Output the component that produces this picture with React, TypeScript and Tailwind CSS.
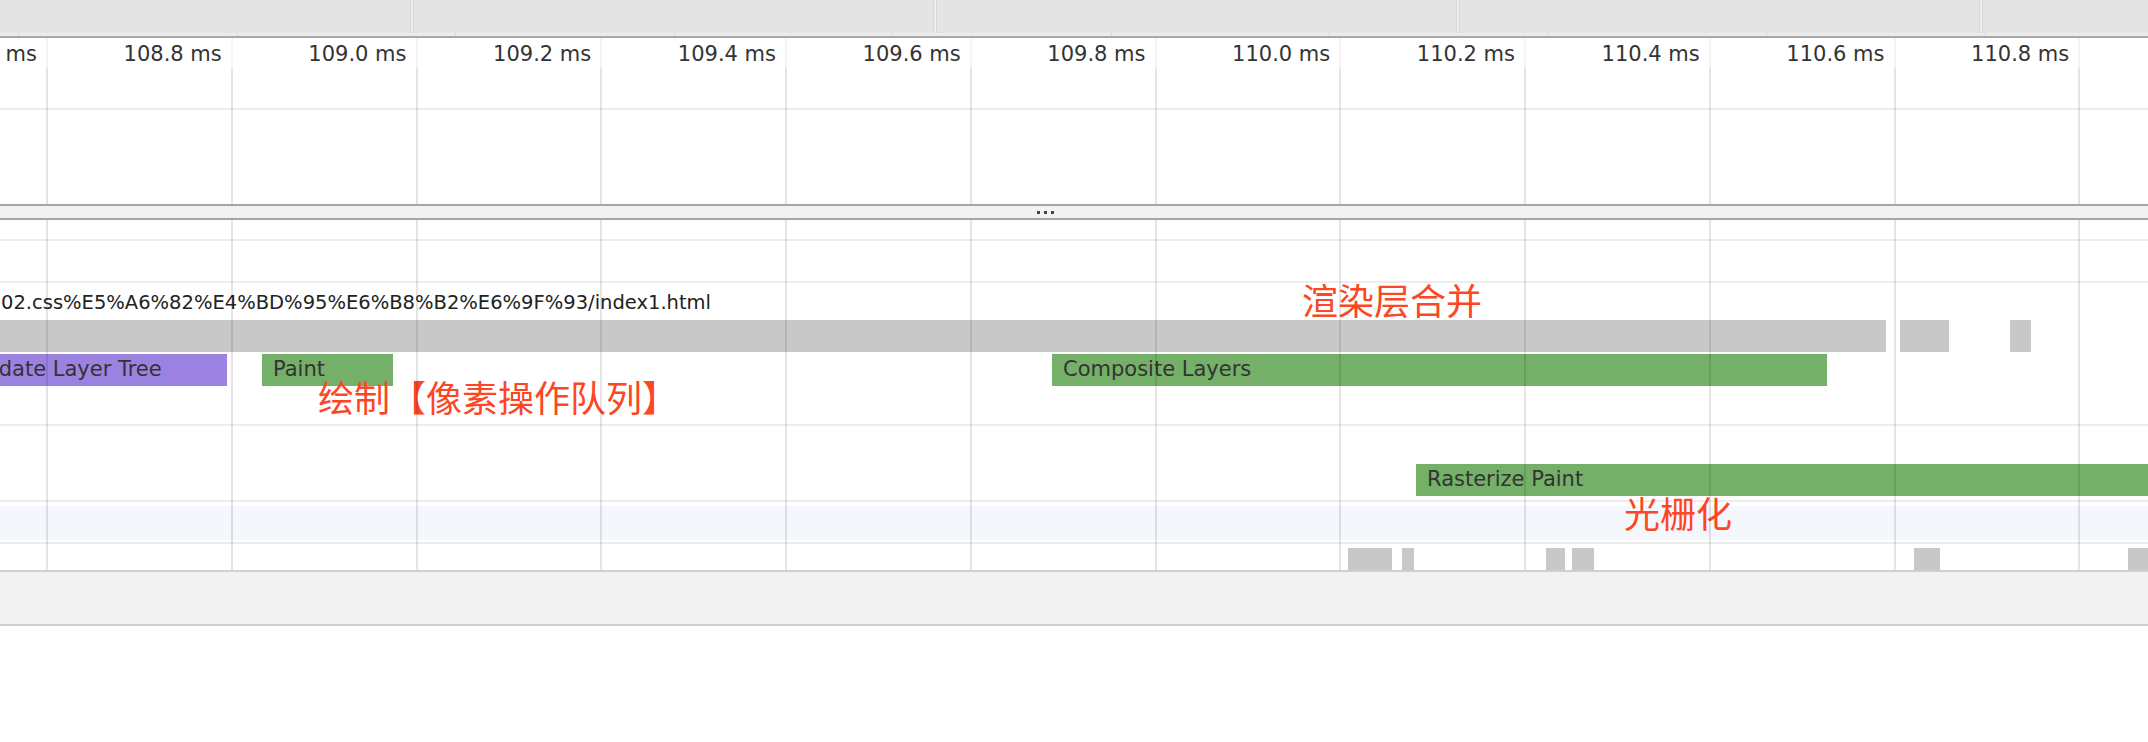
import React from 'react'

type Tone = 'idle' | 'render' | 'paint'

type Span = {
  left: number
  width: number
  tone: Tone
  label?: string
}

// 时间刻度，第一个在左边被裁掉，最后一列在屏幕外
const tickLabels = [
  '108.8 ms',
  '109.0 ms',
  '109.2 ms',
  '109.4 ms',
  '109.6 ms',
  '109.8 ms',
  '110.0 ms',
  '110.2 ms',
  '110.4 ms',
  '110.6 ms',
  '110.8 ms',
]

const GRID_COLUMNS = 12

const toneClass: Record<Tone, string> = {
  idle: 'bg-[#c8c8c8]',
  render: 'bg-[#9c82e0]',
  paint: 'bg-[#74b067]',
}

const taskSpans: Span[] = [
  { left: -10, width: 1896, tone: 'idle' },
  { left: 1900, width: 49, tone: 'idle' },
  { left: 2010, width: 21, tone: 'idle' },
]

const eventSpans: Span[] = [
  { left: -41, width: 268, tone: 'render', label: 'Update Layer Tree' },
  { left: 262, width: 131, tone: 'paint', label: 'Paint' },
  { left: 1052, width: 775, tone: 'paint', label: 'Composite Layers' },
]

const rasterSpans: Span[] = [
  { left: 1416, width: 732, tone: 'paint', label: 'Rasterize Paint' },
]

const gpuSpans: Span[] = [
  { left: 1348, width: 44, tone: 'idle' },
  { left: 1402, width: 12, tone: 'idle' },
  { left: 1546, width: 19, tone: 'idle' },
  { left: 1572, width: 22, tone: 'idle' },
  { left: 1914, width: 26, tone: 'idle' },
  { left: 2128, width: 20, tone: 'idle' },
]

function GridLines({ faint }: { faint?: boolean }) {
  return (
    <div className="flex h-full">
      <div className="w-[46px] shrink-0" />
      {Array.from({ length: GRID_COLUMNS }).map((_, i) => (
        <div
          key={i}
          className={`w-[184.75px] shrink-0 border-l-2 ${faint ? 'border-black/[0.04]' : 'border-black/10'}`}
        />
      ))}
    </div>
  )
}

function Track({ spans, className }: { spans: Span[]; className: string }) {
  return (
    <div className={`relative ${className}`}>
      {spans.map((s, i) => (
        <div
          key={i}
          className={`absolute top-0 bottom-0 flex items-center overflow-hidden whitespace-nowrap pl-[11px] text-[21px] text-[#333] ${toneClass[s.tone]}`}
          style={{ left: s.left, width: s.width }}
        >
          {s.label}
        </div>
      ))}
    </div>
  )
}

function RowLine() {
  return <div className="h-[2px] bg-[#ededed]" />
}

function Note({ text, className }: { text: string; className: string }) {
  return (
    <div
      className={`absolute whitespace-nowrap text-[36px] leading-none text-[#fc4624] font-['Noto_Sans_CJK_SC',sans-serif] ${className}`}
    >
      {text}
    </div>
  )
}

export default function App() {
  return (
    <div className="w-[2148px] h-[742px] overflow-hidden bg-white font-['DejaVu_Sans',sans-serif]">
      {/* 概览条 */}
      <div className="flex h-[33px] gap-[2px] bg-[#ededed]">
        <div className="w-[411px] shrink-0 border-r border-[#d8d8d8] bg-[#e4e4e4]" />
        {[0, 1, 2, 3].map((i) => (
          <div key={i} className="w-[521px] shrink-0 border-x border-[#d8d8d8] bg-[#e4e4e4]" />
        ))}
      </div>
      <div className="flex h-[3px] bg-[#ececec]">
        <div className="w-[18px] shrink-0" />
        {Array.from({ length: 10 }).map((_, i) => (
          <div key={i} className="w-[218.5px] shrink-0 border-l border-[#d6d6d6]" />
        ))}
      </div>
      <div className="h-[2px] bg-[#a8a8a8]" />

      {/* 上半部分：时间轴 */}
      <div className="relative h-[166px]">
        <div className="flex h-[30px] items-center pt-[4px] text-[21px] text-[#333] whitespace-nowrap">
          <div className="flex w-[46px] shrink-0 justify-end overflow-hidden pr-[9px]">108.6 ms</div>
          {tickLabels.map((t) => (
            <div key={t} className="flex w-[184.75px] shrink-0 justify-end overflow-hidden pr-[9px]">
              {t}
            </div>
          ))}
        </div>
        <div className="h-[40px]" />
        <RowLine />
        <div className="h-[94px]" />

        <div className="pointer-events-none absolute inset-x-0 top-0 h-[30px]">
          <GridLines faint />
        </div>
        <div className="pointer-events-none absolute inset-x-0 top-[30px] bottom-0">
          <GridLines />
        </div>
      </div>

      {/* 分隔条 */}
      <div className="h-[2px] bg-[#a6a6a6]" />
      <div className="flex h-[12px] items-center gap-[4px] bg-[#f2f2f2] pl-[1037px]">
        <div className="h-[3px] w-[3px] bg-[#444]" />
        <div className="h-[3px] w-[3px] bg-[#444]" />
        <div className="h-[3px] w-[3px] bg-[#444]" />
      </div>
      <div className="h-[2px] bg-[#a6a6a6]" />

      {/* 下半部分：主线程 */}
      <div className="relative h-[350px]">
        <div className="h-[19px]" />
        <RowLine />
        <div className="h-[40px]" />
        <RowLine />
        <div className="flex h-[37px] items-center pt-[2px] pl-[1px] whitespace-nowrap text-[19.5px] text-[#222]">
          02.css%E5%A6%82%E4%BD%95%E6%B8%B2%E6%9F%93/index1.html
        </div>
        <Track spans={taskSpans} className="h-[32px]" />
        <div className="h-[2px]" />
        <Track spans={eventSpans} className="h-[32px]" />
        <div className="h-[38px]" />
        <RowLine />
        <div className="h-[38px]" />
        <Track spans={rasterSpans} className="h-[32px]" />
        <div className="h-[4px]" />
        <RowLine />
        <div className="h-[4px]" />
        <div className="h-[34px] bg-[#f4f7fc]" />
        <div className="h-[2px]" />
        <RowLine />
        <div className="h-[4px]" />
        <Track spans={gpuSpans} className="h-[22px]" />

        <Note text="渲染层合并" className="left-[1302px] top-[61px]" />
        <Note text="绘制【像素操作队列】" className="left-[318px] top-[158px]" />
        <Note text="光栅化" className="left-[1624px] top-[274px]" />

        <div className="pointer-events-none absolute inset-0 z-10">
          <GridLines />
        </div>
      </div>
      <div className="h-[2px] bg-[#d0d0d0]" />

      {/* 底部面板 */}
      <div className="h-[52px] bg-[#f2f2f2]" />
      <div className="h-[2px] bg-[#d0d0d0]" />
    </div>
  )
}
